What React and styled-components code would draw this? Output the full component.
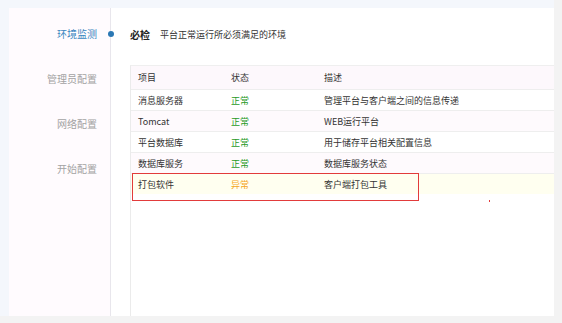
import React from "react";
import styled, { createGlobalStyle } from "styled-components";

const GlobalStyle = createGlobalStyle`
  html, body { margin: 0; padding: 0; background: #f3f3f3; }
  body { font-family: "Noto Sans CJK SC", "Noto Sans", sans-serif; }
`;

const Page = styled.div`
  width: 562px;
  height: 323px;
  background: #f3f3f3;
  overflow: hidden;
`;

const Frame = styled.div`
  width: 554px;
  height: 316px;
  box-sizing: border-box;
  padding: 8px 0 0 9px;
  background: #f4f7fc;
  display: flex;
`;

const Panel = styled.div`
  flex: 1;
  display: flex;
  background: #fff;
  overflow: hidden;
`;

const Sidebar = styled.div`
  width: 102px;
  flex: none;
  box-sizing: border-box;
  background: #fffbfe;
  border-right: 1px solid #e8e6ec;
  padding-top: 16px;
  display: flex;
  flex-direction: column;
  gap: 25px;
`;

const NavItem = styled.div`
  position: relative;
  height: 20px;
  line-height: 20px;
  text-align: right;
  padding-right: 13px;
  font-size: 10px;
  color: ${(p) => (p.$active ? "#3b86c0" : "#a3a3a3")};
`;

const Dot = styled.span`
  position: absolute;
  right: -4px;
  top: 7px;
  width: 6px;
  height: 6px;
  border-radius: 50%;
  background: #2b78b4;
`;

const Content = styled.div`
  flex: 1;
  min-width: 0;
  display: flex;
  flex-direction: column;
  padding: 16px 0 0 19px;
`;

const Heading = styled.div`
  display: flex;
  align-items: center;
  height: 20px;
  gap: 10px;
`;

const Title = styled.span`
  font-size: 10px;
  font-weight: 700;
  color: #222;
`;

const Subtitle = styled.span`
  font-size: 9px;
  color: #333;
`;

const TableWrap = styled.div`
  position: relative;
  margin-top: 21px;
  flex: 1;
  border-left: 1px solid #ebebeb;
  border-top: 1px solid #efefef;
`;

const Row = styled.div`
  display: grid;
  grid-template-columns: 93px 93px 1fr;
  height: ${(p) => (p.$header ? "23px" : "20px")};
  align-items: center;
  font-size: 9px;
  color: #333;
  background: ${(p) => p.$bg};
  border-bottom: ${(p) => (p.$last ? "none" : "1px solid #eeeeee")};
`;

const Cell = styled.div`
  padding-left: 7px;
  white-space: nowrap;
  color: ${(p) => p.$color || "inherit"};
`;

const Highlight = styled.div`
  position: absolute;
  left: 1px;
  top: 107px;
  width: 287px;
  height: 28px;
  box-sizing: border-box;
  border: 1px solid #e23b3b;
`;

const Speck = styled.div`
  position: absolute;
  left: 358px;
  top: 134px;
  width: 1px;
  height: 2px;
  background: #e23b3b;
`;

const rows = [
  { name: "消息服务器", ok: true, desc: "管理平台与客户端之间的信息传递" },
  { name: "Tomcat", ok: true, desc: "WEB运行平台" },
  { name: "平台数据库", ok: true, desc: "用于储存平台相关配置信息" },
  { name: "数据库服务", ok: true, desc: "数据库服务状态" },
  { name: "打包软件", ok: false, desc: "客户端打包工具" },
];

export default function App() {
  return (
    <Page>
      <GlobalStyle />
      <Frame>
        <Panel>
          <Sidebar>
            <NavItem $active>
              环境监测
              <Dot />
            </NavItem>
            <NavItem>管理员配置</NavItem>
            <NavItem>网络配置</NavItem>
            <NavItem>开始配置</NavItem>
          </Sidebar>
          <Content>
            <Heading>
              <Title>必检</Title>
              <Subtitle>平台正常运行所必须满足的环境</Subtitle>
            </Heading>
            <TableWrap>
              <Row $header $bg="#fdf8fc">
                <Cell>项目</Cell>
                <Cell>状态</Cell>
                <Cell>描述</Cell>
              </Row>
              {rows.map((r, i) => (
                <Row
                  key={r.name}
                  $last={!r.ok}
                  $bg={!r.ok ? "#fffff0" : i % 2 === 1 ? "#fefafd" : "#ffffff"}
                >
                  <Cell>{r.name}</Cell>
                  <Cell $color={r.ok ? "#1f9a1f" : "#f5a623"}>{r.ok ? "正常" : "异常"}</Cell>
                  <Cell>{r.desc}</Cell>
                </Row>
              ))}
              <Highlight />
              <Speck />
            </TableWrap>
          </Content>
        </Panel>
      </Frame>
    </Page>
  );
}
